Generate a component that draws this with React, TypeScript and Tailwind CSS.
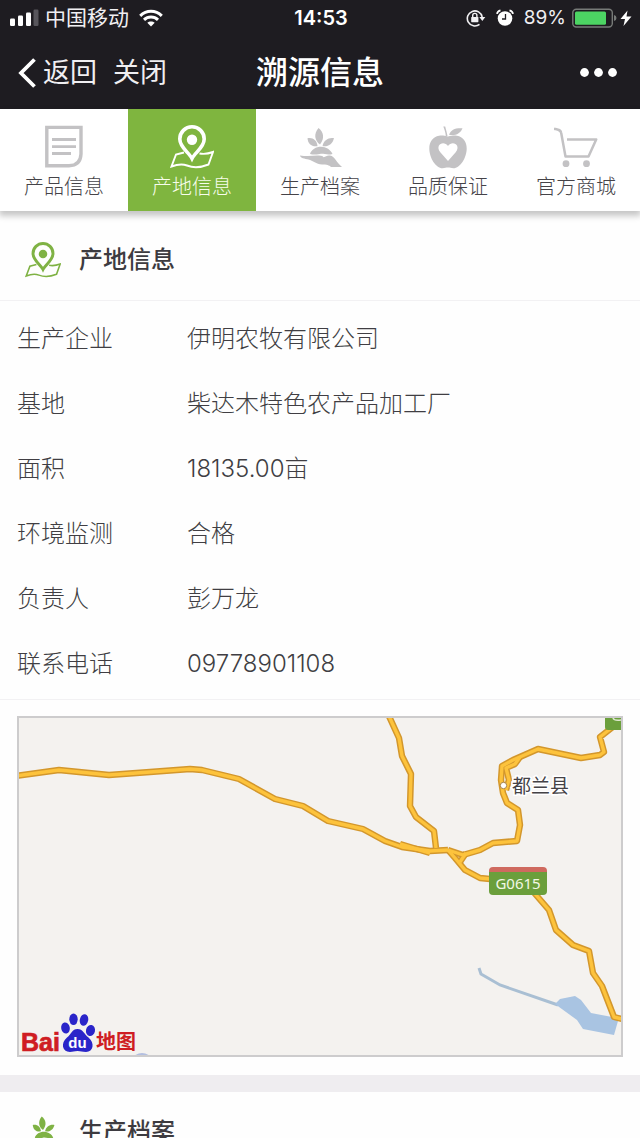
import type { ReactNode } from "react";

type IconProps = { className?: string };

const roads = [
  "M388 714 L399 738 L402 756 L411 774 L410 806 L416 817 L434 831 L436 848",
  "M506 790 L509 780 L506 768 L515 764 L520 757",
  "M400 844 L430 853",
  "M460 862 L466 853",
  "M16 776 L59 770 L109 775 L150 772 L190 769 L202 770 L239 779 L275 799 L303 806 L328 821 L363 829 L385 841 L402 847 L430 851 L448 850",
  "M448 850 L463 855 L480 850 L493 843 L517 841 L520 825 L518 810 L507 803 L503 793 L501 780 L502 766 L513 760 L538 749 L581 758 L600 755 L604 752 L600 737 L614 726",
  "M448 850 L455 858 L465 870 L480 878 L500 880",
  "M530 888 L549 910 L556 930 L573 945 L589 951 L593 973 L602 986 L614 1017 L626 1020",
];

function DocumentIcon({ className }: IconProps) {
  return (
    <svg viewBox="0 0 44 44" className={className} fill="none" stroke="currentColor" aria-hidden="true">
      <path d="M4.8 2.4H39V29Q38.5 40.5 27 40.7H4.8Z" strokeWidth="3.4" />
      <path d="M10 14.5H34M10 21.6H34M10 28.5H29" strokeWidth="2.8" />
    </svg>
  );
}

function OriginIcon({ className }: IconProps) {
  return (
    <svg viewBox="0 0 44 44" className={className} fill="none" stroke="currentColor" aria-hidden="true">
      <path
        d="M22 33.5C19 27.5 9.8 22.5 9.8 14A12.2 12.2 0 0 1 34.2 14C34.2 22.5 25 27.5 22 33.5Z"
        strokeWidth="3.6"
      />
      <circle cx="22" cy="14.8" r="5.2" fill="currentColor" stroke="none" />
      <path
        d="M14 27.5L6 29.5L1.5 41.5C8 39 12 38.5 17 40.5C24 43.3 31 42.5 38.5 39.5L43 27C39 28.5 35 29.5 29.5 28.5"
        strokeWidth="1.9"
      />
    </svg>
  );
}

function PlantIcon({ className }: IconProps) {
  return (
    <svg viewBox="0 0 44 44" className={className} fill="currentColor" aria-hidden="true">
      <path d="M20.5 3C25.5 7 27 13 22 19.5C16.5 15.5 15.5 9 20.5 3Z" />
      <path d="M9.5 13.3C15 12.3 19 15.5 19.5 21.2C13.5 22 10 19 9.5 13.3Z" />
      <path d="M36 13.3C30.5 12.3 25.5 15.500 24.5 21.2C30.5 22 34.5 19 36 13.3Z" />
      <path d="M12 29C13.5 24.5 18 21.800 23 21.8C28 21.8 33 25 34.5 29C29 30.5 26 28.300 22 28.900C18 29.500 16 30 12 29Z" />
      <path d="M2 30.5C8 31.5 14 31 19 30.6C23 30.2 25 31 25.5 32.3C28 31.5 29 30 32 30.5C37 31.5 38 37 44 42H33C31 40 29 39.7 24 39.5C18 39.2 15 35.5 10.5 34.5C7 33.7 2 33 2 30.5Z" />
    </svg>
  );
}

function AppleIcon({ className }: IconProps) {
  return (
    <svg viewBox="0 0 44 44" className={className} fill="currentColor" aria-hidden="true">
      <path d="M17.3 1.6L19.2 1.4C20 5 21 7.5 21.5 11H19.8C19.5 7.5 18.5 4.5 17.3 1.6Z" />
      <path d="M23 9.8C25 4.5 29 2.8 36.5 3.2C34.5 8.5 29.5 11 23 9.8Z" />
      <path
        fillRule="evenodd"
        d="M22 11.5C26 10.5 28 10.2 31 10.7C37 11.7 40.7 16.5 40.7 23.5C40.7 33 34 43.3 27.5 43.3C25 43.3 24 42.6 22 42.6C20 42.6 19 43.3 16.5 43.3C10 43.3 3.3 33 3.3 23.5C3.3 16.5 7 11.7 13 10.7C16 10.2 18 10.5 22 11.5ZM22 36L14.3 27.3C8.5 19.5 18 14.8 22 21C26 14.8 35.5 19.5 29.7 27.3Z"
      />
    </svg>
  );
}

function CartIcon({ className }: IconProps) {
  return (
    <svg viewBox="0 0 44 44" className={className} fill="none" stroke="currentColor" aria-hidden="true">
      <path d="M0 3.6C4 4.5 6.700 4.5 7.2 8L11.5 31.5H34.5L42.2 14.5H13" strokeWidth="2.5" strokeLinejoin="round" />
      <circle cx="12" cy="38.7" r="3.4" fill="currentColor" stroke="none" />
      <circle cx="32.5" cy="38.7" r="3.4" fill="currentColor" stroke="none" />
    </svg>
  );
}

function StatusBar() {
  return (
    <div className="grid h-9 grid-cols-[1fr_auto_1fr] items-center pr-2 pl-2.5 text-[#f0eff2]">
      <div className="flex items-center">
        <svg viewBox="0 0 29 18" className="h-[18px] w-[29px]" aria-hidden="true">
          <rect x="0" y="9.5" width="5" height="7.5" rx="1.2" fill="#fff" />
          <rect x="8" y="6.5" width="5" height="10.5" rx="1.2" fill="#fff" />
          <rect x="16" y="3.5" width="5" height="13.5" rx="1.2" fill="#fff" />
          <rect x="23.5" y="0.5" width="5" height="16.5" rx="1.2" fill="#57555b" />
        </svg>
        <span className="ml-1.5 text-[21px] leading-9">中国移动</span>
        <svg viewBox="0 0 24 18" className="ml-2.5 h-[18px] w-6" fill="none" stroke="#fff" strokeWidth="3" aria-hidden="true">
          <path d="M1.2 6.800C7.5 .8 16.5 .8 22.8 6.8" />
          <path d="M5 10.8C9 7 15 7 19 10.8" />
          <path d="M12 17.5L8.3 13.8C10.3 11.9 13.7 11.9 15.7 13.8Z" fill="#fff" stroke="none" />
        </svg>
      </div>
      <span className="text-[20px] font-semibold text-white">14:53</span>
      <div className="flex items-center justify-end">
        <svg viewBox="0 0 20 18" className="h-[18px] w-5" fill="none" stroke="currentColor" aria-hidden="true">
          <path d="M13.5 15.3A7.5 7.5 0 1 1 16.2 8" strokeWidth="1.6" />
          <path d="M13.3 8H19.3L16.3 12Z" fill="currentColor" stroke="none" />
          <rect x="5.2" y="8" width="7.2" height="5.2" rx=".6" fill="currentColor" stroke="none" />
          <path d="M6.7 8.5V6.5A2.1 2.1 0 0 1 10.9 6.5V8.5" strokeWidth="1.4" />
        </svg>
        <svg viewBox="0 0 18 18" className="ml-2.5 h-[18px] w-[18px]" fill="none" stroke="#fff" aria-hidden="true">
          <circle cx="9" cy="9.5" r="7.3" fill="#fff" stroke="none" />
          <path d="M1 4.8C1.3 3 2.5 1.7 4.5 1.3M17 4.8C16.7 3 15.5 1.7 13.5 1.3" strokeWidth="1.8" />
          <path d="M9.5 5V10H6" stroke="#1e1c21" strokeWidth="1.3" />
        </svg>
        <span className="ml-2.5 text-[19px]">89%</span>
        <svg viewBox="0 0 60 20" className="ml-1.5 h-5 w-[60px]" aria-hidden="true">
          <rect x=".8" y="1.2" width="39.5" height="17.8" rx="3.5" fill="none" stroke="#777a78" strokeWidth="1.4" />
          <rect x="3" y="3.5" width="31" height="13.2" rx="1.5" fill="#4cd463" />
          <path d="M42 7Q44.5 7.5 44.5 10T42 13Z" fill="#777a78" />
          <path d="M55.5 2.5L48.5 11H53L51.5 18L59.5 8.5H54.5Z" fill="#fff" />
        </svg>
      </div>
    </div>
  );
}

function NavBar() {
  return (
    <div className="grid h-[73px] grid-cols-[1fr_auto_1fr] items-center px-[18px] text-[#f0eff2]">
      <div className="flex items-center gap-4 text-[27px] leading-10">
        <button type="button" className="flex items-center gap-[7px]">
          <svg viewBox="0 0 18 30" className="h-[30px] w-[18px]" fill="none" stroke="#fff" strokeWidth="3.8" aria-hidden="true">
            <path d="M16.5 1.5L3 15L16.5 28.5" />
          </svg>
          返回
        </button>
        <button type="button">关闭</button>
      </div>
      <h1 className="text-[32px] leading-10 font-medium text-white">溯源信息</h1>
      <button type="button" aria-label="更多" className="justify-self-end pr-1">
        <svg viewBox="0 0 38 10" className="h-2.5 w-[38px]" fill="#fff" aria-hidden="true">
          <circle cx="4.5" cy="4.5" r="4.4" />
          <circle cx="18.5" cy="4.5" r="4.4" />
          <circle cx="32.5" cy="4.5" r="4.4" />
        </svg>
      </button>
    </div>
  );
}

const tabs = [
  { label: "产品信息", Icon: DocumentIcon, active: false },
  { label: "产地信息", Icon: OriginIcon, active: true },
  { label: "生产档案", Icon: PlantIcon, active: false },
  { label: "品质保证", Icon: AppleIcon, active: false },
  { label: "官方商城", Icon: CartIcon, active: false },
];

function TabBar() {
  return (
    <nav className="relative z-10 grid h-[102px] shrink-0 grid-cols-5 bg-white shadow-[0_4px_6px_1px_rgba(0,0,0,0.22)]">
      {tabs.map(({ label, Icon, active }) => (
        <a
          key={label}
          href="#"
          aria-current={active ? "page" : undefined}
          className={
            active
              ? "flex flex-col items-center bg-[#7fb53f] pt-4 text-[#f7fdec]"
              : "flex flex-col items-center pt-4 text-[#454348]"
          }
        >
          <Icon className={active ? "h-11 w-11 text-white" : "h-11 w-11 text-[#c3c2c4]"} />
          <span className="mt-1 text-[20px] leading-7 font-light">{label}</span>
        </a>
      ))}
    </nav>
  );
}

function SectionHeader({ icon, title }: { icon: ReactNode; title: string }) {
  return (
    <div className="flex h-20 items-center gap-[18px] pl-[25px]">
      {icon}
      <h2 className="text-[24px] leading-8 font-medium text-[#3d3b40]">{title}</h2>
    </div>
  );
}

const details = [
  ["生产企业", "伊明农牧有限公司"],
  ["基地", "柴达木特色农产品加工厂"],
  ["面积", "18135.00亩"],
  ["环境监测", "合格"],
  ["负责人", "彭万龙"],
  ["联系电话", "09778901108"],
];

function OriginMap() {
  return (
    <div className="px-[17px] pt-4 pb-[18px]">
      <div className="border-2 border-[#cdcccd] bg-[#f4f2ef]">
        <svg viewBox="19 718 602 337" className="block h-auto w-full" role="img" aria-label="产地地图">
          <path d="M479 968L481 974L500 985L558 1005" fill="none" stroke="#a9bfd3" strokeWidth="3" />
          <path
            d="M555 1004L560 999L575 996L581 1000L591 1013L612 1017L618 1021L614 1035L583 1029L577 1020Z"
            fill="#a9c4e2"
          />
          <path d="M134 1056Q142 1050 150 1056Z" fill="#b3bfe0" />
          <g fill="none" stroke="#d3972c" strokeWidth="6.4" strokeLinejoin="round">
            {roads.map((d) => (
              <path key={d} d={d} />
            ))}
          </g>
          <g fill="none" stroke="#fdc33c" strokeWidth="3.4" strokeLinejoin="round">
            {roads.map((d) => (
              <path key={d} d={d} />
            ))}
          </g>
          <circle cx="503.5" cy="785.5" r="3.2" fill="#fff" stroke="#a88246" strokeWidth="1" />
          <text x="512" y="793" fontSize="19" fill="#444246" stroke="#fff" strokeWidth="3" paintOrder="stroke">
            都兰县
          </text>
          <rect x="489" y="867" width="58" height="20" rx="4" fill="#cf6a5f" />
          <path d="M489 872H547V891Q547 895 543 895H493Q489 895 489 891Z" fill="#6b9f3c" />
          <text x="518" y="889" fontSize="15" fill="#f3f8e6" textAnchor="middle" className="font-['Noto_Sans']">
            G0615
          </text>
          <path d="M605 718H621V730H608Q605 730 605 727Z" fill="#6b9f3c" />
          <path d="M613 718Q614 721 621 720" fill="none" stroke="#dfe8d0" strokeWidth="1.5" />
          <text
            x="21"
            y="1051"
            fontSize="25"
            fontWeight="700"
            fill="#cf1d22"
            stroke="#cf1d22"
            strokeWidth=".7"
            className="font-['Liberation_Sans']"
          >
            Bai
          </text>
          <g fill="#2a25c9">
            <ellipse cx="65.5" cy="1028" rx="4.300" ry="5.5" transform="rotate(-12 65.5 1028)" />
            <ellipse cx="73.5" cy="1019.3" rx="4.2" ry="5.8" />
            <ellipse cx="84" cy="1020" rx="4.2" ry="5.8" transform="rotate(12 84 1020)" />
            <ellipse cx="90.5" cy="1030.5" rx="4.5" ry="5.5" transform="rotate(12 90.5 1030.5)" />
            <path d="M77.5 1029C83 1029 84 1034 88.5 1037.500C95 1043 93.5 1052 86 1052C82 1052 81 1051 77.5 1051C74 1051 73 1052 70 1052C62 1052 60.5 1043 67 1037.5C71.5 1034 72 1029 77.5 1029Z" />
          </g>
          <text x="77.5" y="1048" fontSize="15" fontWeight="700" fill="#fff" textAnchor="middle" className="font-['Liberation_Sans']">
            du
          </text>
          <text x="96" y="1049" fontSize="20" fontWeight="700" fill="#cf1d22">
            地图
          </text>
        </svg>
      </div>
    </div>
  );
}

export default function App() {
  return (
    <div className="flex h-screen flex-col overflow-hidden bg-[#efedf0] font-['Inter','Noto_Sans_CJK_SC',sans-serif]">
      <header className="shrink-0 bg-[#1e1c21]">
        <StatusBar />
        <NavBar />
      </header>
      <TabBar />
      <main className="flex-1 overflow-y-auto [scrollbar-width:none]">
        <section className="bg-[#fefefe] pt-[9px]">
          <SectionHeader
            title="产地信息"
            icon={<OriginIcon className="h-9 w-9 text-[#7fb244]" />}
          />
          <dl className="border-y border-[#f2f1f3] pt-[5px] pb-[3px] text-[24px] font-light text-[#403e43]">
            {details.map(([name, value]) => (
              <div key={name} className="flex h-[65px] items-center pl-[17px]">
                <dt className="w-[170px] shrink-0">{name}</dt>
                <dd>{value}</dd>
              </div>
            ))}
          </dl>
          <OriginMap />
        </section>
        <section className="mt-[17px] bg-[#fefefe]">
          <SectionHeader
            title="生产档案"
            icon={<PlantIcon className="h-9 w-9 text-[#7fb244]" />}
          />
        </section>
      </main>
    </div>
  );
}
